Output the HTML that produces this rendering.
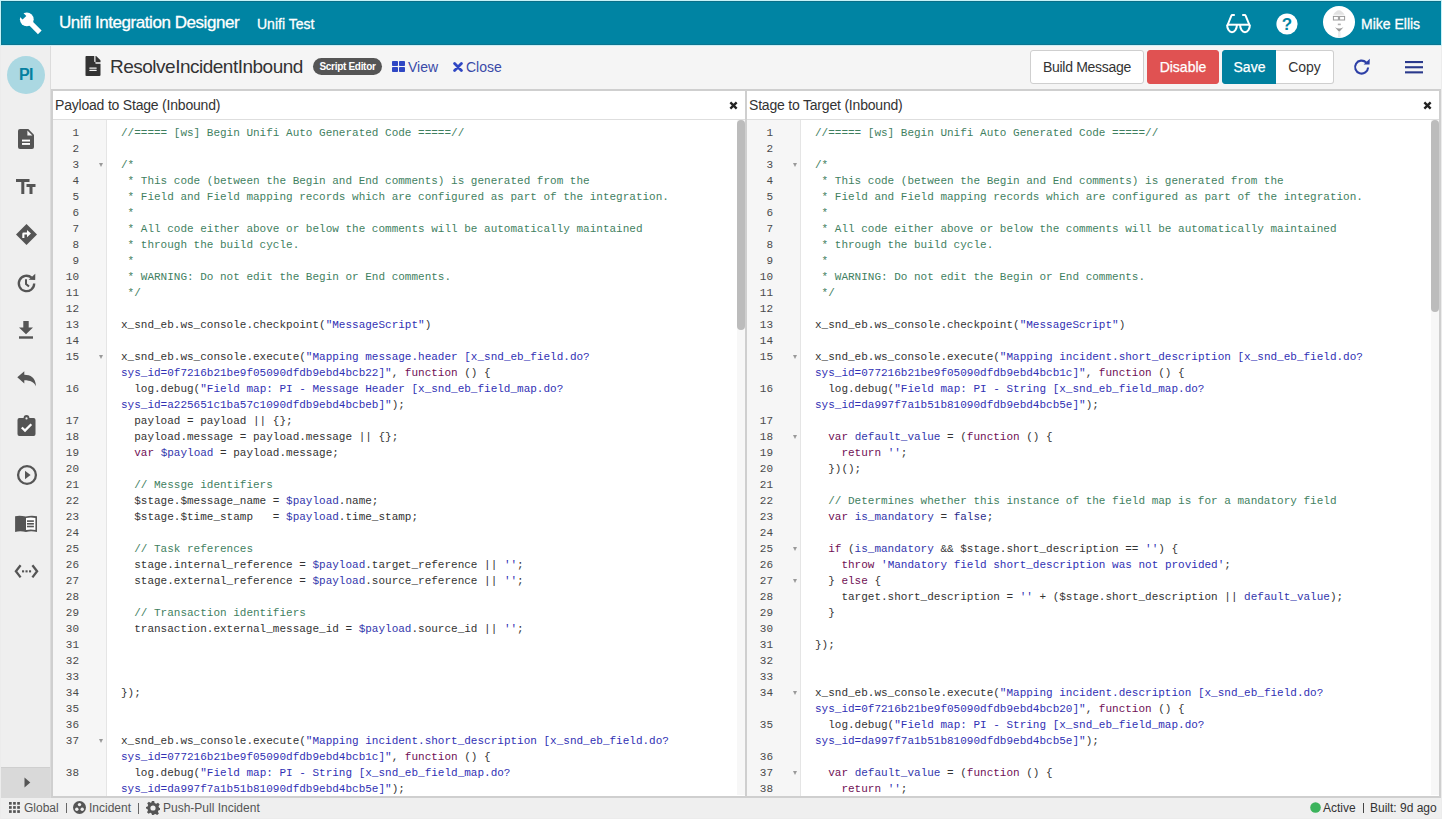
<!DOCTYPE html>
<html><head><meta charset="utf-8">
<style>
*{box-sizing:border-box;margin:0;padding:0}
html,body{width:1442px;height:819px;overflow:hidden;background:#ececec;font-family:"Liberation Sans",sans-serif;position:relative}
.a{position:absolute}
#hdr{left:1px;top:1px;width:1440px;height:44px;background:#0084a3;border-top:1px solid #0a6f88;box-shadow:inset 1px 0 0 #0a7890,inset 0 -1px 0 #0b7591}
#hdr .t1{left:58px;top:11px;font-size:17px;letter-spacing:-0.45px;color:#fff;-webkit-text-stroke:0.3px #fff;white-space:nowrap}
#hdr .t2{left:256px;top:14px;font-size:14px;color:#fff;-webkit-text-stroke:0.3px #fff;white-space:nowrap}
#hdr .t3{left:1360px;top:14px;font-size:14px;color:#fff;-webkit-text-stroke:0.3px #fff;white-space:nowrap}
#side{left:1px;top:45px;width:50px;height:753px;background:#efefef;border-right:1px solid #dcdcdc}
#tb{left:51px;top:45px;width:1390px;height:44px;background:#f5f5f5}
.pi{left:6px;top:11px;width:38px;height:38px;border-radius:50%;background:#abd8e2;color:#0580a0;font-weight:bold;font-size:16px;text-align:center;line-height:38px;letter-spacing:-0.5px}
.panel{top:89px;height:709px;background:#fff;border:2px solid #cfcfcf}
#p1{left:51px;width:696px}
#p2{left:745px;width:696px}
.ph{left:0;top:0;width:100%;height:29px;border-bottom:1px solid #dedede;background:#fff}
.ph .tt{left:2px;top:6px;font-size:14px;letter-spacing:-0.2px;color:#333;white-space:nowrap}
.ph .x{right:7px;top:10px;width:9px;height:9px}
.gut{left:0;top:29px;width:54px;height:676px;background:#f6f6f6;border-right:1px solid #e5e5e5;overflow:hidden}
.gn{position:absolute;left:0;width:26px;text-align:right;height:16px;line-height:16px;font-family:"Liberation Mono",monospace;font-size:11px;color:#4a4a4a}
.fw{position:absolute;left:46px;width:0;height:0;margin-top:6px;border-left:2.5px solid transparent;border-right:2.5px solid transparent;border-top:4px solid #999}
.code{left:68px;top:34px;width:616px;height:671px;overflow:hidden}
.gut .inner{position:absolute;left:0;top:5px;width:54px;height:700px}
.ln{position:absolute;left:0;height:16px;line-height:16px;white-space:pre;font-family:"Liberation Mono",monospace;font-size:11px;color:#333}
.c{color:#3f7f5f}
.s{color:#3030b4}
.k{color:#701055}
.v{color:#3236ac}
.b{color:#2a2a8a}
.sb{top:29px;width:8px;height:675px;background:#f7f7f7}
.th{left:0;top:0;width:8px;border-radius:4px;background:#bcbcbc}
#status{left:1px;top:798px;width:1440px;height:20px;background:#efefef;font-size:12px;color:#555;white-space:nowrap}
.btn{top:5px;height:34px;border:1px solid #cfcfcf;border-radius:3px;background:#fff;font-size:14px;color:#333;text-align:center;line-height:32px;white-space:nowrap}
#tb .ttl{left:59px;top:11px;font-size:19px;letter-spacing:-0.5px;color:#333;white-space:nowrap}
.badge{left:262px;top:13px;width:69px;height:17px;border-radius:9px;background:#555;color:#fff;font-weight:bold;font-size:10px;letter-spacing:-0.3px;line-height:17px;text-align:center;white-space:nowrap}
.lnk{top:14px;font-size:14px;color:#3a4aa8;white-space:nowrap}
.st{top:3px;font-size:12px;color:#555;white-space:nowrap}
</style></head><body>
<div class="a" style="left:0;top:0;width:1442px;height:46px;background:#c6f2f8"></div>
<div id="hdr" class="a">
  <svg class="a" style="left:-1px;top:-2px" width="60" height="45" viewBox="0 0 60 45"><g transform="translate(0,0)"><line x1="27" y1="19.5" x2="39.8" y2="32.3" stroke="#fff" stroke-width="5.2"/><circle cx="26.8" cy="19.3" r="6.9" fill="#fff"/><path d="M21.6 11.2 L26.3 15.9 L22.6 19.6 L17.9 14.9 Z" fill="#0083a3"/></g></svg>
  <div class="a t1">Unifi Integration Designer</div>
  <div class="a t2">Unifi Test</div>
  <svg class="a" style="left:1221px;top:9px" width="34" height="26" viewBox="0 0 34 26"><g fill="none" stroke="#fff" stroke-width="2"><path d="M5.1 13.7 H27.9"/><path d="M5.1 13.7 A4.9 7.5 0 0 0 14.9 13.7"/><path d="M18.1 13.7 A4.9 7.5 0 0 0 27.9 13.7"/><path d="M5.4 14.5 L9.3 4.8 Q9.6 4.1 10.4 4.1 H12.8"/><path d="M27.6 14.5 L23.7 4.8 Q23.4 4.1 22.6 4.1 H20.2"/></g></svg>
  <svg class="a" style="left:1275px;top:11px" width="22" height="22" viewBox="0 0 22 22"><circle cx="11" cy="11" r="10.6" fill="#fff"/><text x="11" y="17" text-anchor="middle" font-family="Liberation Sans" font-weight="bold" font-size="17" fill="#0083a3">?</text></svg>
  <svg class="a" style="left:1322px;top:4px" width="32" height="32" viewBox="0 0 32 32"><circle cx="16" cy="16" r="16" fill="#fff"/><path d="M10.2 8.8 Q16 -0.5 21.6 8.8 Z" fill="#e2e2e2"/><g fill="none" stroke="#999" stroke-width="1"><rect x="10.4" y="10.4" width="5" height="3.6"/><rect x="16.6" y="10.4" width="5" height="3.6"/></g><rect x="14.8" y="17.6" width="3" height="1.6" fill="#b0b0b0"/><path d="M12 21.2 Q16 23.6 20.4 21.2 L16.2 26 Z" fill="#9a9a9a"/><rect x="15" y="25.5" width="2.5" height="6" fill="#ececec"/></svg>
  <div class="a t3">Mike Ellis</div>
</div>
<div id="side" class="a">
  <div class="a pi">PI</div>
  <svg class="a" style="left:17px;top:84px" width="16" height="20" viewBox="0 0 16 20"><path fill="#555" d="M2 0 H10.3 L16 5.7 V18 Q16 20 14 20 H2 Q0 20 0 18 V2 Q0 0 2 0 Z"/><path fill="#f4f4f4" d="M9.4 1.6 V6.6 H14.4 Z"/><rect x="4" y="10.6" width="8" height="1.9" fill="#fff"/><rect x="4" y="14" width="8" height="1.9" fill="#fff"/></svg>
  <svg class="a" style="left:15px;top:134px" width="20" height="15" viewBox="0 0 20 15"><g fill="#555"><rect x="0" y="0" width="13.5" height="3"/><rect x="5.3" y="0" width="3" height="15"/><rect x="10.5" y="5" width="9" height="3"/><rect x="13.5" y="5" width="3" height="10"/></g></svg>
  <svg class="a" style="left:15px;top:179px" width="21" height="21" viewBox="0 0 21 21"><path fill="#555" d="M10.5 0 L21 10.5 L10.5 21 L0 10.5 Z"/><path fill="#fff" d="M6.3 14 V10 Q6.3 8.6 7.7 8.6 H11 V6 L15 9.6 L11 13.2 V10.6 H8.4 V14 Z"/></svg>
  <svg class="a" style="left:15px;top:228px" width="21" height="21" viewBox="0 0 21 21"><path d="M18.2 10.5 A7.7 7.7 0 1 1 15.6 4.7" fill="none" stroke="#555" stroke-width="2.3"/><path d="M12.6 6.8 L19.2 6.9 L19.3 0.8 Z" fill="#555"/><path d="M10 6.2 V11 L13 13.6" fill="none" stroke="#555" stroke-width="2"/></svg>
  <svg class="a" style="left:17px;top:276px" width="16" height="18" viewBox="0 0 16 18"><path fill="#555" d="M5.3 0 H10.7 V6.5 H15 L8 13.2 L1 6.5 H5.3 Z"/><rect x="1" y="15.3" width="14" height="2.4" fill="#555"/></svg>
  <svg class="a" style="left:16px;top:326px" width="20" height="16" viewBox="0 0 20 16"><path fill="#555" d="M0.3 6.2 L7.3 0.3 V3.8 C13.5 3.9 18.6 6.5 19 15.2 C16.9 11 13.6 9.3 7.3 9.2 V12.6 Z"/></svg>
  <svg class="a" style="left:16px;top:370px" width="19" height="21" viewBox="0 0 19 21"><path fill="#555" d="M2.3 3 H6.6 A2.9 2.9 0 0 1 12.4 3 H16.7 Q18.5 3 18.5 5 V19 Q18.5 21 16.7 21 H2.3 Q0.5 21 0.5 19 V5 Q0.5 3 2.3 3 Z"/><circle cx="9.5" cy="3.4" r="1.1" fill="#efefef"/><path d="M4.8 12.5 L8 15.6 L14.3 9.2" fill="none" stroke="#fff" stroke-width="2.3"/></svg>
  <svg class="a" style="left:14.5px;top:419px" width="22" height="22" viewBox="0 0 22 22"><circle cx="11" cy="11" r="8.9" fill="none" stroke="#555" stroke-width="2.3"/><path d="M9 6.8 L14.6 11 L9 15.2 Z" fill="#555"/></svg>
  <svg class="a" style="left:14px;top:470px" width="23" height="18" viewBox="0 0 23 18"><path fill="#555" d="M0.1 1.2 Q5 0 10.7 1.6 Q16 0 22 1.2 V17 Q16 15.6 11 17 Q5 15.6 0.1 17 Z"/><path fill="#fff" d="M11 3 Q16 1.9 20.4 3 V14.9 Q16 13.9 11 14.9 Z"/><g fill="#555"><rect x="12" y="5.3" width="6.9" height="1.6"/><rect x="12" y="8" width="6.9" height="1.6"/><rect x="12" y="10.7" width="6.9" height="1.6"/></g></svg>
  <svg class="a" style="left:13px;top:519px" width="25" height="15" viewBox="0 0 25 15"><path d="M6.6 1.2 L1.9 7.3 L6.6 13.4 M18.4 1.2 L23.1 7.3 L18.4 13.4" fill="none" stroke="#555" stroke-width="2.3"/><g fill="#555"><rect x="8" y="6.3" width="2.1" height="2.1"/><rect x="11.5" y="6.3" width="2.1" height="2.1"/><rect x="15" y="6.3" width="2.1" height="2.1"/></g></svg>
  <div class="a" style="left:0;top:722px;width:49px;height:31px;background:#d9d9d9;border-top:1px solid #cfcfcf"></div>
  <svg class="a" style="left:23px;top:732px" width="7" height="11" viewBox="0 0 7 11"><path d="M0.5 0.5 L6.3 5.5 L0.5 10.5 Z" fill="#555"/></svg>
</div>
<div id="tb" class="a">
  <svg class="a" style="left:34px;top:11px" width="16" height="20" viewBox="0 0 384 512"><path fill="#333" d="M224 136V0H24C10.7 0 0 10.7 0 24v464c0 13.3 10.7 24 24 24h336c13.3 0 24-10.7 24-24V160H248c-13.2 0-24-10.8-24-24zm64 236c0 6.6-5.4 12-12 12H108c-6.6 0-12-5.4-12-12v-8c0-6.6 5.4-12 12-12h168c6.6 0 12 5.4 12 12v8zm0-64v8c0 6.6-5.4 12-12 12H108c-6.6 0-12-5.4-12-12v-8c0-6.6 5.4-12 12-12h168c6.6 0 12 5.4 12 12zm96-114.1v6.1H256V0h6.1c6.4 0 12.5 2.5 17 7l97.9 98c4.5 4.5 7 10.6 7 16.9z"/></svg>
  <div class="a ttl">ResolveIncidentInbound</div>
  <div class="a badge">Script Editor</div>
  <svg class="a" style="left:341px;top:16px" width="13" height="11" viewBox="0 0 13 11"><g fill="#2f47c4"><rect x="0" y="0" width="6" height="5" rx="0.8"/><rect x="7" y="0" width="6" height="5" rx="0.8"/><rect x="0" y="6" width="6" height="5" rx="0.8"/><rect x="7" y="6" width="6" height="5" rx="0.8"/></g></svg>
  <div class="a lnk" style="left:357px">View</div>
  <svg class="a" style="left:402px;top:17px" width="10" height="10" viewBox="0 0 10 10"><path d="M1.6 1.6 L8.4 8.4 M8.4 1.6 L1.6 8.4" stroke="#2f47c4" stroke-width="2.8" stroke-linecap="round"/></svg>
  <div class="a lnk" style="left:415px">Close</div>
  <div class="a btn" style="left:979px;width:114px;letter-spacing:-0.3px">Build Message</div>
  <div class="a btn" style="left:1096px;width:72px;background:#e05252;border-color:#e05252;color:#fff;-webkit-text-stroke:0.25px #fff">Disable</div>
  <div class="a btn" style="left:1171px;width:55px;background:#00809f;border-color:#00809f;color:#fff;border-radius:3px 0 0 3px;-webkit-text-stroke:0.25px #fff">Save</div>
  <div class="a btn" style="left:1225px;width:58px;border-radius:0 3px 3px 0;border-left:0">Copy</div>
  <svg class="a" style="left:1302px;top:13px" width="18" height="18" viewBox="0 0 18 18"><path d="M15.1 9.5 A6.5 6.5 0 1 1 13.2 4.5" fill="none" stroke="#2d3fa6" stroke-width="2.1"/><path d="M10.6 6.5 L16.6 6.6 L16.8 0.8 Z" fill="#2d3fa6"/></svg>
  <svg class="a" style="left:1354px;top:16px" width="18" height="13" viewBox="0 0 18 13"><g fill="#2a3a8c"><rect x="0" y="0" width="18" height="2.1"/><rect x="0" y="5.2" width="18" height="2.1"/><rect x="0" y="10.3" width="18" height="2.1"/></g></svg>
</div>
<div id="p1" class="a panel">
  <div class="a ph"><div class="a tt">Payload to Stage (Inbound)</div><svg class="a x" viewBox="0 0 10 10"><path d="M1.5 1.5 L8.5 8.5 M8.5 1.5 L1.5 8.5" stroke="#222" stroke-width="2.6"/></svg></div>
  <div class="a gut"><div class="inner"><div class="gn" style="top:0px">1</div>
<div class="gn" style="top:16px">2</div>
<div class="gn" style="top:32px">3</div>
<div class="fw" style="top:32px"></div>
<div class="gn" style="top:48px">4</div>
<div class="gn" style="top:64px">5</div>
<div class="gn" style="top:80px">6</div>
<div class="gn" style="top:96px">7</div>
<div class="gn" style="top:112px">8</div>
<div class="gn" style="top:128px">9</div>
<div class="gn" style="top:144px">10</div>
<div class="gn" style="top:160px">11</div>
<div class="gn" style="top:176px">12</div>
<div class="gn" style="top:192px">13</div>
<div class="gn" style="top:208px">14</div>
<div class="gn" style="top:224px">15</div>
<div class="fw" style="top:224px"></div>
<div class="gn" style="top:256px">16</div>
<div class="gn" style="top:288px">17</div>
<div class="gn" style="top:304px">18</div>
<div class="gn" style="top:320px">19</div>
<div class="gn" style="top:336px">20</div>
<div class="gn" style="top:352px">21</div>
<div class="gn" style="top:368px">22</div>
<div class="gn" style="top:384px">23</div>
<div class="gn" style="top:400px">24</div>
<div class="gn" style="top:416px">25</div>
<div class="gn" style="top:432px">26</div>
<div class="gn" style="top:448px">27</div>
<div class="gn" style="top:464px">28</div>
<div class="gn" style="top:480px">29</div>
<div class="gn" style="top:496px">30</div>
<div class="gn" style="top:512px">31</div>
<div class="gn" style="top:528px">32</div>
<div class="gn" style="top:544px">33</div>
<div class="gn" style="top:560px">34</div>
<div class="gn" style="top:576px">35</div>
<div class="gn" style="top:592px">36</div>
<div class="gn" style="top:608px">37</div>
<div class="fw" style="top:608px"></div>
<div class="gn" style="top:640px">38</div></div></div>
  <div class="a code"><div class="ln" style="top:0px"><span class="c">//===== [ws] Begin Unifi Auto Generated Code =====//</span></div>
<div class="ln" style="top:16px"></div>
<div class="ln" style="top:32px"><span class="c">/*</span></div>
<div class="ln" style="top:48px"><span class="c"> * This code (between the Begin and End comments) is generated from the</span></div>
<div class="ln" style="top:64px"><span class="c"> * Field and Field mapping records which are configured as part of the integration.</span></div>
<div class="ln" style="top:80px"><span class="c"> *</span></div>
<div class="ln" style="top:96px"><span class="c"> * All code either above or below the comments will be automatically maintained</span></div>
<div class="ln" style="top:112px"><span class="c"> * through the build cycle.</span></div>
<div class="ln" style="top:128px"><span class="c"> *</span></div>
<div class="ln" style="top:144px"><span class="c"> * WARNING: Do not edit the Begin or End comments.</span></div>
<div class="ln" style="top:160px"><span class="c"> */</span></div>
<div class="ln" style="top:176px"></div>
<div class="ln" style="top:192px">x_snd_eb.ws_console.checkpoint(<span class="s">&quot;MessageScript&quot;</span>)</div>
<div class="ln" style="top:208px"></div>
<div class="ln" style="top:224px">x_snd_eb.ws_console.execute(<span class="s">&quot;Mapping message.header [x_snd_eb_field.do?</span></div>
<div class="ln" style="top:240px"><span class="s">sys_id=0f7216b21be9f05090dfdb9ebd4bcb22]&quot;</span>, <span class="k">function</span> () {</div>
<div class="ln" style="top:256px">  log.debug(<span class="s">&quot;Field map: PI - Message Header [x_snd_eb_field_map.do?</span></div>
<div class="ln" style="top:272px"><span class="s">sys_id=a225651c1ba57c1090dfdb9ebd4bcbeb]&quot;</span>);</div>
<div class="ln" style="top:288px">  payload = payload || {};</div>
<div class="ln" style="top:304px">  payload.message = payload.message || {};</div>
<div class="ln" style="top:320px">  <span class="k">var</span> <span class="v">$payload</span> = payload.message;</div>
<div class="ln" style="top:336px"></div>
<div class="ln" style="top:352px">  <span class="c">// Messge identifiers</span></div>
<div class="ln" style="top:368px">  $stage.$message_name = <span class="v">$payload</span>.name;</div>
<div class="ln" style="top:384px">  $stage.$time_stamp   = <span class="v">$payload</span>.time_stamp;</div>
<div class="ln" style="top:400px"></div>
<div class="ln" style="top:416px">  <span class="c">// Task references</span></div>
<div class="ln" style="top:432px">  stage.internal_reference = <span class="v">$payload</span>.target_reference || <span class="s">&#x27;&#x27;</span>;</div>
<div class="ln" style="top:448px">  stage.external_reference = <span class="v">$payload</span>.source_reference || <span class="s">&#x27;&#x27;</span>;</div>
<div class="ln" style="top:464px"></div>
<div class="ln" style="top:480px">  <span class="c">// Transaction identifiers</span></div>
<div class="ln" style="top:496px">  transaction.external_message_id = <span class="v">$payload</span>.source_id || <span class="s">&#x27;&#x27;</span>;</div>
<div class="ln" style="top:512px"></div>
<div class="ln" style="top:528px"></div>
<div class="ln" style="top:544px"></div>
<div class="ln" style="top:560px">});</div>
<div class="ln" style="top:576px"></div>
<div class="ln" style="top:592px"></div>
<div class="ln" style="top:608px">x_snd_eb.ws_console.execute(<span class="s">&quot;Mapping incident.short_description [x_snd_eb_field.do?</span></div>
<div class="ln" style="top:624px"><span class="s">sys_id=077216b21be9f05090dfdb9ebd4bcb1c]&quot;</span>, <span class="k">function</span> () {</div>
<div class="ln" style="top:640px">  log.debug(<span class="s">&quot;Field map: PI - String [x_snd_eb_field_map.do?</span></div>
<div class="ln" style="top:656px"><span class="s">sys_id=da997f7a1b51b81090dfdb9ebd4bcb5e]&quot;</span>);</div></div>
  <div class="a sb" style="left:684px"><div class="a th" style="height:210px"></div></div>
</div>
<div id="p2" class="a panel">
  <div class="a ph"><div class="a tt">Stage to Target (Inbound)</div><svg class="a x" viewBox="0 0 10 10"><path d="M1.5 1.5 L8.5 8.5 M8.5 1.5 L1.5 8.5" stroke="#222" stroke-width="2.6"/></svg></div>
  <div class="a gut"><div class="inner"><div class="gn" style="top:0px">1</div>
<div class="gn" style="top:16px">2</div>
<div class="gn" style="top:32px">3</div>
<div class="fw" style="top:32px"></div>
<div class="gn" style="top:48px">4</div>
<div class="gn" style="top:64px">5</div>
<div class="gn" style="top:80px">6</div>
<div class="gn" style="top:96px">7</div>
<div class="gn" style="top:112px">8</div>
<div class="gn" style="top:128px">9</div>
<div class="gn" style="top:144px">10</div>
<div class="gn" style="top:160px">11</div>
<div class="gn" style="top:176px">12</div>
<div class="gn" style="top:192px">13</div>
<div class="gn" style="top:208px">14</div>
<div class="gn" style="top:224px">15</div>
<div class="fw" style="top:224px"></div>
<div class="gn" style="top:256px">16</div>
<div class="gn" style="top:288px">17</div>
<div class="gn" style="top:304px">18</div>
<div class="fw" style="top:304px"></div>
<div class="gn" style="top:320px">19</div>
<div class="gn" style="top:336px">20</div>
<div class="gn" style="top:352px">21</div>
<div class="gn" style="top:368px">22</div>
<div class="gn" style="top:384px">23</div>
<div class="gn" style="top:400px">24</div>
<div class="gn" style="top:416px">25</div>
<div class="fw" style="top:416px"></div>
<div class="gn" style="top:432px">26</div>
<div class="gn" style="top:448px">27</div>
<div class="fw" style="top:448px"></div>
<div class="gn" style="top:464px">28</div>
<div class="gn" style="top:480px">29</div>
<div class="gn" style="top:496px">30</div>
<div class="gn" style="top:512px">31</div>
<div class="gn" style="top:528px">32</div>
<div class="gn" style="top:544px">33</div>
<div class="gn" style="top:560px">34</div>
<div class="fw" style="top:560px"></div>
<div class="gn" style="top:592px">35</div>
<div class="gn" style="top:624px">36</div>
<div class="gn" style="top:640px">37</div>
<div class="fw" style="top:640px"></div>
<div class="gn" style="top:656px">38</div></div></div>
  <div class="a code"><div class="ln" style="top:0px"><span class="c">//===== [ws] Begin Unifi Auto Generated Code =====//</span></div>
<div class="ln" style="top:16px"></div>
<div class="ln" style="top:32px"><span class="c">/*</span></div>
<div class="ln" style="top:48px"><span class="c"> * This code (between the Begin and End comments) is generated from the</span></div>
<div class="ln" style="top:64px"><span class="c"> * Field and Field mapping records which are configured as part of the integration.</span></div>
<div class="ln" style="top:80px"><span class="c"> *</span></div>
<div class="ln" style="top:96px"><span class="c"> * All code either above or below the comments will be automatically maintained</span></div>
<div class="ln" style="top:112px"><span class="c"> * through the build cycle.</span></div>
<div class="ln" style="top:128px"><span class="c"> *</span></div>
<div class="ln" style="top:144px"><span class="c"> * WARNING: Do not edit the Begin or End comments.</span></div>
<div class="ln" style="top:160px"><span class="c"> */</span></div>
<div class="ln" style="top:176px"></div>
<div class="ln" style="top:192px">x_snd_eb.ws_console.checkpoint(<span class="s">&quot;MessageScript&quot;</span>)</div>
<div class="ln" style="top:208px"></div>
<div class="ln" style="top:224px">x_snd_eb.ws_console.execute(<span class="s">&quot;Mapping incident.short_description [x_snd_eb_field.do?</span></div>
<div class="ln" style="top:240px"><span class="s">sys_id=077216b21be9f05090dfdb9ebd4bcb1c]&quot;</span>, <span class="k">function</span> () {</div>
<div class="ln" style="top:256px">  log.debug(<span class="s">&quot;Field map: PI - String [x_snd_eb_field_map.do?</span></div>
<div class="ln" style="top:272px"><span class="s">sys_id=da997f7a1b51b81090dfdb9ebd4bcb5e]&quot;</span>);</div>
<div class="ln" style="top:288px"></div>
<div class="ln" style="top:304px">  <span class="k">var</span> <span class="v">default_value</span> = (<span class="k">function</span> () {</div>
<div class="ln" style="top:320px">    <span class="k">return</span> <span class="s">&#x27;&#x27;</span>;</div>
<div class="ln" style="top:336px">  })();</div>
<div class="ln" style="top:352px"></div>
<div class="ln" style="top:368px">  <span class="c">// Determines whether this instance of the field map is for a mandatory field</span></div>
<div class="ln" style="top:384px">  <span class="k">var</span> <span class="v">is_mandatory</span> = <span class="b">false</span>;</div>
<div class="ln" style="top:400px"></div>
<div class="ln" style="top:416px">  <span class="k">if</span> (<span class="v">is_mandatory</span> &amp;&amp; $stage.short_description == <span class="s">&#x27;&#x27;</span>) {</div>
<div class="ln" style="top:432px">    <span class="k">throw</span> <span class="s">&#x27;Mandatory field short_description was not provided&#x27;</span>;</div>
<div class="ln" style="top:448px">  } <span class="k">else</span> {</div>
<div class="ln" style="top:464px">    target.short_description = <span class="s">&#x27;&#x27;</span> + ($stage.short_description || <span class="v">default_value</span>);</div>
<div class="ln" style="top:480px">  }</div>
<div class="ln" style="top:496px"></div>
<div class="ln" style="top:512px">});</div>
<div class="ln" style="top:528px"></div>
<div class="ln" style="top:544px"></div>
<div class="ln" style="top:560px">x_snd_eb.ws_console.execute(<span class="s">&quot;Mapping incident.description [x_snd_eb_field.do?</span></div>
<div class="ln" style="top:576px"><span class="s">sys_id=0f7216b21be9f05090dfdb9ebd4bcb20]&quot;</span>, <span class="k">function</span> () {</div>
<div class="ln" style="top:592px">  log.debug(<span class="s">&quot;Field map: PI - String [x_snd_eb_field_map.do?</span></div>
<div class="ln" style="top:608px"><span class="s">sys_id=da997f7a1b51b81090dfdb9ebd4bcb5e]&quot;</span>);</div>
<div class="ln" style="top:624px"></div>
<div class="ln" style="top:640px">  <span class="k">var</span> <span class="v">default_value</span> = (<span class="k">function</span> () {</div>
<div class="ln" style="top:656px">    <span class="k">return</span> <span class="s">&#x27;&#x27;</span>;</div></div>
  <div class="a sb" style="left:684px"><div class="a th" style="height:192px"></div></div>
</div>
<div class="a" style="left:1px;top:45px;width:1440px;height:1px;background:#cdeef4"></div>
<div id="status" class="a">
  <svg class="a" style="left:8px;top:4px" width="11" height="11" viewBox="0 0 11 11"><g fill="#555"><rect x="0.0" y="0.0" width="2.7" height="2.7"/><rect x="4.1" y="0.0" width="2.7" height="2.7"/><rect x="8.2" y="0.0" width="2.7" height="2.7"/><rect x="0.0" y="4.1" width="2.7" height="2.7"/><rect x="4.1" y="4.1" width="2.7" height="2.7"/><rect x="8.2" y="4.1" width="2.7" height="2.7"/><rect x="0.0" y="8.2" width="2.7" height="2.7"/><rect x="4.1" y="8.2" width="2.7" height="2.7"/><rect x="8.2" y="8.2" width="2.7" height="2.7"/></g></svg>
  <div class="a st" style="left:23px">Global</div>
  <div class="a" style="left:65px;top:5px;width:1px;height:10px;background:#666"></div>
  <svg class="a" style="left:72px;top:3px" width="13" height="13" viewBox="0 0 13 13"><circle cx="6.5" cy="6.5" r="6.5" fill="#555"/><circle cx="6.5" cy="3.6" r="1.7" fill="#efefef"/><circle cx="3.8" cy="8.3" r="1.7" fill="#efefef"/><circle cx="9.2" cy="8.3" r="1.7" fill="#efefef"/></svg>
  <div class="a st" style="left:88px">Incident</div>
  <div class="a" style="left:137px;top:5px;width:1px;height:11px;background:#666"></div>
  <svg class="a" style="left:145px;top:3px" width="14" height="14" viewBox="0 0 14 14"><path fill="#555" fill-rule="evenodd" d="M5.8 0 H8.2 L8.6 2 L10.2 2.8 L12 1.7 L13.7 3.4 L12.5 5.2 L13.1 6.8 L14 7.1 V8.9 L12.6 9.3 L11.9 10.8 L12.9 12.5 L11.2 14 L9.4 12.9 L8 13.4 L7.6 14 H6 L5.6 12.4 L4.3 11.8 L2.6 12.8 L1 11.2 L2 9.5 L1.4 8 L0 7.6 V5.9 L1.6 5.5 L2.2 4 L1.2 2.3 L2.9 0.7 L4.5 1.7 L5.6 1.3 Z M7 4.4 A2.6 2.6 0 1 0 7 9.6 A2.6 2.6 0 1 0 7 4.4 Z"/></svg>
  <div class="a st" style="left:162px">Push-Pull Incident</div>
  <svg class="a" style="left:1309px;top:4px" width="11" height="11" viewBox="0 0 11 11"><circle cx="5.5" cy="5.5" r="5.3" fill="#3cb35c"/></svg>
  <div class="a st" style="left:1322px;color:#333">Active</div>
  <div class="a" style="left:1362px;top:5px;width:1px;height:10px;background:#444"></div>
  <div class="a st" style="left:1369px;color:#333">Built: 9d ago</div>
</div>
</body></html>
